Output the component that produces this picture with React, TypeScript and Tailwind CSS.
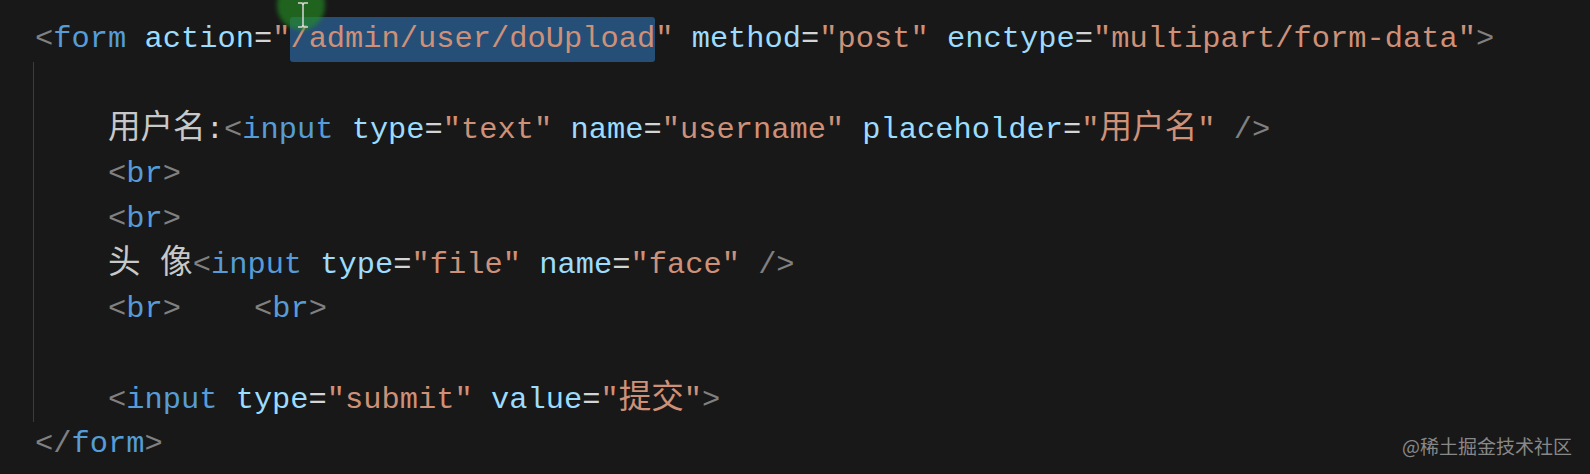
type Tok = { t: string; c: string; cjk?: boolean; sel?: boolean };

const P = '#808080';
const TAG = '#569cd6';
const ATTR = '#9cdcfe';
const EQ = '#d4d4d4';
const STR = '#ce9178';
const TXT = '#d4d4d4';

const colorClass: Record<string, string> = {
  [P]: 'text-[#808080]',
  [TAG]: 'text-[#569cd6]',
  [ATTR]: 'text-[#9cdcfe]',
  [EQ]: 'text-[#d4d4d4]',
  [STR]: 'text-[#ce9178]',
};

const inner: Tok[][] = [
  [],
  [
    { t: '    ', c: TXT },
    { t: '用户名', c: TXT, cjk: true },
    { t: ':', c: TXT },
    { t: '<', c: P },
    { t: 'input', c: TAG },
    { t: ' ', c: TXT },
    { t: 'type', c: ATTR },
    { t: '=', c: EQ },
    { t: '"text"', c: STR },
    { t: ' ', c: TXT },
    { t: 'name', c: ATTR },
    { t: '=', c: EQ },
    { t: '"username"', c: STR },
    { t: ' ', c: TXT },
    { t: 'placeholder', c: ATTR },
    { t: '=', c: EQ },
    { t: '"', c: STR },
    { t: '用户名', c: STR, cjk: true },
    { t: '"', c: STR },
    { t: ' />', c: P },
  ],
  [
    { t: '    ', c: TXT },
    { t: '<', c: P },
    { t: 'br', c: TAG },
    { t: '>', c: P },
  ],
  [
    { t: '    ', c: TXT },
    { t: '<', c: P },
    { t: 'br', c: TAG },
    { t: '>', c: P },
  ],
  [
    { t: '    ', c: TXT },
    { t: '头 像', c: TXT, cjk: true },
    { t: '<', c: P },
    { t: 'input', c: TAG },
    { t: ' ', c: TXT },
    { t: 'type', c: ATTR },
    { t: '=', c: EQ },
    { t: '"file"', c: STR },
    { t: ' ', c: TXT },
    { t: 'name', c: ATTR },
    { t: '=', c: EQ },
    { t: '"face"', c: STR },
    { t: ' />', c: P },
  ],
  [
    { t: '    ', c: TXT },
    { t: '<', c: P },
    { t: 'br', c: TAG },
    { t: '>', c: P },
    { t: '    ', c: TXT },
    { t: '<', c: P },
    { t: 'br', c: TAG },
    { t: '>', c: P },
  ],
  [],
  [
    { t: '    ', c: TXT },
    { t: '<', c: P },
    { t: 'input', c: TAG },
    { t: ' ', c: TXT },
    { t: 'type', c: ATTR },
    { t: '=', c: EQ },
    { t: '"submit"', c: STR },
    { t: ' ', c: TXT },
    { t: 'value', c: ATTR },
    { t: '=', c: EQ },
    { t: '"', c: STR },
    { t: '提交', c: STR, cjk: true },
    { t: '"', c: STR },
    { t: '>', c: P },
  ],
];

const first: Tok[] = [
  { t: '<', c: P },
  { t: 'form', c: TAG },
  { t: ' ', c: TXT },
  { t: 'action', c: ATTR },
  { t: '=', c: EQ },
  { t: '"', c: STR },
  { t: '/admin/user/doUpload', c: STR, sel: true },
  { t: '"', c: STR },
  { t: ' ', c: TXT },
  { t: 'method', c: ATTR },
  { t: '=', c: EQ },
  { t: '"post"', c: STR },
  { t: ' ', c: TXT },
  { t: 'enctype', c: ATTR },
  { t: '=', c: EQ },
  { t: '"multipart/form-data"', c: STR },
  { t: '>', c: P },
];

const last: Tok[] = [
  { t: '</', c: P },
  { t: 'form', c: TAG },
  { t: '>', c: P },
];

const Line = ({ tokens }: { tokens: Tok[] }) => (
  <div className="h-[45px] leading-[45px] whitespace-pre">
    {tokens.map((tok, i) => (
      <span
        key={i}
        className={`${tok.cjk && tok.c === TXT ? 'text-[#c8c8c8]' : colorClass[tok.c] ?? 'text-[#d4d4d4]'} ${
          tok.cjk ? 'text-[32.6px]' : ''
        } ${tok.sel ? 'inline-block h-[45px] -mt-[2px] bg-[#264f78] rounded-[3px]' : ''}`}
      >
        {tok.t}
      </span>
    ))}
  </div>
);

export default function App() {
  return (
    <div
      className="relative w-[1590px] h-[474px] overflow-hidden bg-[#181818] pt-[17px] pl-[35px] text-[30.4px]"
      style={{ fontFamily: '"Liberation Mono", "Noto Sans CJK SC", monospace' }}
    >
      <Line tokens={first} />
      <div className="-ml-[2px] border-l border-[#3c3c3c]">
        <div className="pl-[1px]">
          {inner.map((tokens, i) => (
            <Line key={i} tokens={tokens} />
          ))}
        </div>
      </div>
      <Line tokens={last} />

      {/* click highlight over the selection */}
      <div className="absolute left-[277px] top-[-20px] w-[48px] h-[50px] rounded-full bg-[#238c23]/65 blur-[2px]" />

      {/* text cursor */}
      <svg className="absolute left-[296px] top-[2px]" width="14" height="26" viewBox="0 0 14 26">
        <path d="M2 1h4l1 2 1-2h4M7 3v20M2 25h4l1-2 1 2h4" fill="none" stroke="#d8d8d8" strokeWidth="1.5" />
      </svg>

      <div
        className="absolute right-[18px] bottom-[14px] text-[19px] text-[#888888]"
        style={{ fontFamily: '"Noto Sans CJK SC", "Noto Sans", sans-serif' }}
      >
        @稀土掘金技术社区
      </div>
    </div>
  );
}
